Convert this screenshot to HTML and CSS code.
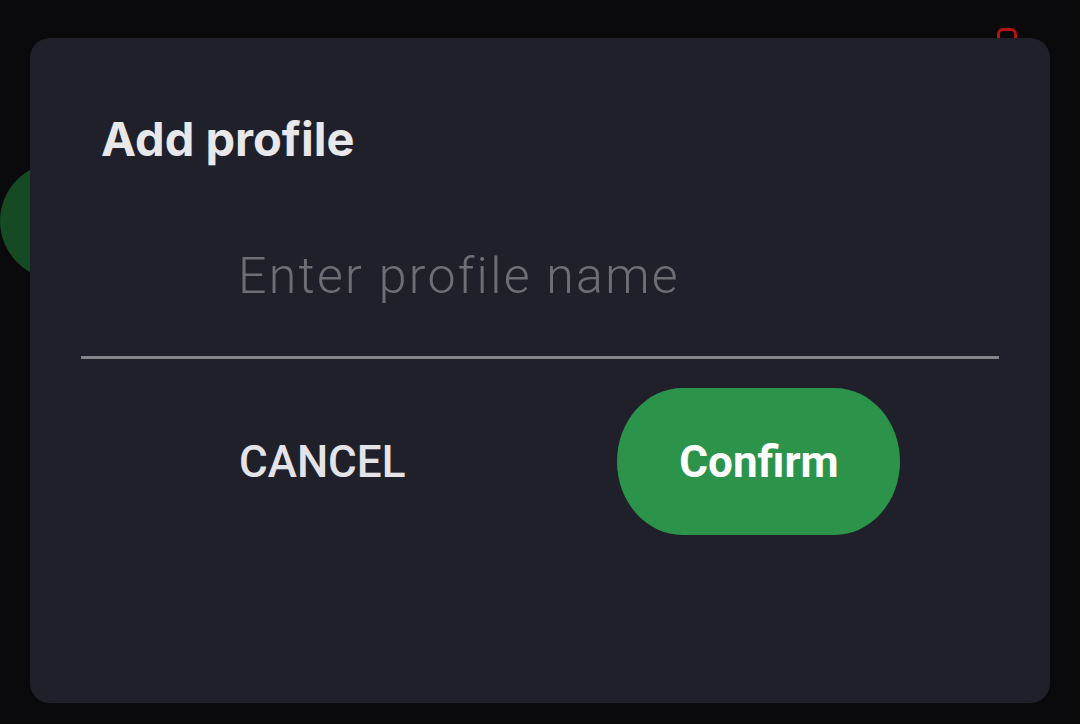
FILE: index.html
```html
<!DOCTYPE html>
<html lang="en">
<head>
  <meta charset="UTF-8">
  <title>Add profile</title>
  <link rel="stylesheet" href="styles.css">
</head>
<body>

<!-- Screen behind the dialog -->
<div class="backdrop">
  <div class="fab"></div>
  <div class="badge"></div>
</div>

<!-- Dialog -->
<div class="dialog">
  <h1 class="dialog-title">Add profile</h1>
  <input type="text" class="name-input" placeholder="Enter profile name">
  <div class="dialog-actions">
    <button class="btn-cancel">CANCEL</button>
    <button class="btn-confirm">Confirm</button>
  </div>
</div>

</body>
</html>
```

FILE: styles.css
```css
* {
  box-sizing: border-box;
}
body {
  margin: 0;
  height: 724px;
  overflow: hidden;
  background: #0a0a0c;
  font-family: Roboto, 'Liberation Sans', sans-serif;
  padding: 38px 30px 21px 30px;
}
/* Things left on the screen behind */
.backdrop {
  position: fixed;
  inset: 0;
}
.fab {
  position: absolute;
  left: 0;
  top: 162px;
  width: 120px;
  height: 118px;
  border-radius: 50%;
  background: #164a24;
}
.badge {
  position: absolute;
  left: 997px;
  top: 28px;
  width: 20px;
  height: 20px;
  border: 3px solid #b51414;
  border-radius: 6px;
}
/* Dialog */
.dialog {
  position: relative;
  height: 665px;
  background: #20202b;
  border-radius: 20px;
  padding: 77px 51px 0 51px;
}
.dialog-title {
  margin: 0 0 0 20px;
  font-family: Inter, Roboto, sans-serif;
  font-size: 47px;
  line-height: 48px;
  font-weight: 700;
  color: #e8e8ea;
}
.name-input {
  display: block;
  width: 100%;
  margin-top: 83px;
  padding: 0 0 50px 157px;
  height: 113px;
  line-height: 60px;
  border: none;
  border-bottom: 3px solid #85858a;
  background: transparent;
  font-family: Roboto, 'Liberation Sans', sans-serif;
  font-size: 50px;
  font-weight: 300;
  letter-spacing: 2.3px;
  color: #e8e8ea;
  outline: none;
}
.name-input::placeholder {
  color: #6e6e74;
}
.dialog-actions {
  display: flex;
  align-items: center;
  gap: 212px;
  margin-top: 29px;
  padding-left: 158px;
}
.btn-cancel {
  padding: 0;
  border: none;
  background: none;
  font-family: inherit;
  font-size: 44px;
  font-weight: 500;
  color: #e4e4e8;
}
.btn-confirm {
  width: 283px;
  height: 147px;
  border: none;
  border-radius: 66px / 74px;
  background: #2b944a;
  font-family: inherit;
  font-size: 44px;
  font-weight: 700;
  color: #ffffff;
}
```
